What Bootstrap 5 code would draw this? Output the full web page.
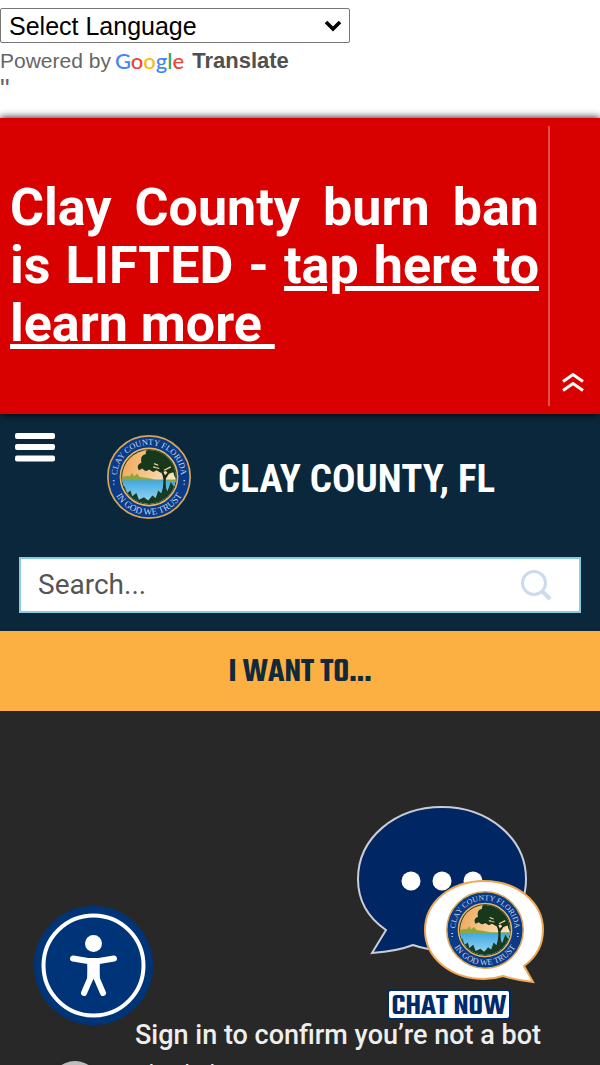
<!DOCTYPE html>
<html lang="en">
<head>
<meta charset="utf-8">
<meta name="viewport" content="width=device-width, initial-scale=1">
<title>Clay County, FL</title>
<link href="https://cdn.jsdelivr.net/npm/bootstrap@5.3.0/dist/css/bootstrap.min.css" rel="stylesheet">
<style>
  body { font-family: Roboto, "Liberation Sans", sans-serif; background: #282828; }
  .translate-bar { font: 21px/28px "Liberation Sans", sans-serif; color: #666; padding-bottom: 15px; }
  .language-select {
    appearance: none; width: 350px; height: 35px; padding: 0 36px 0 8px; font-size: 25px; line-height: 32px; color: #000;
    border: 1px solid #767676; border-radius: 2px;
    background: #fff url("data:image/svg+xml,%3Csvg xmlns='http://www.w3.org/2000/svg' viewBox='0 0 18 12'%3E%3Cpath d='M2 2l7 7 7-7' fill='none' stroke='%23000' stroke-width='3.6'/%3E%3C/svg%3E") no-repeat right 7px center / 18px 12px;
  }
  .google-word { font-family: Lato, sans-serif; font-size: 22px; font-weight: 500; }
  .g-blue { color: #4285f4; } .g-red { color: #ea4335; } .g-yellow { color: #fbbc05; } .g-green { color: #34a853; }
  .translate-word { color: #505050; font-size: 22px; }
  .stray-quote { font-size: 27px; }
  .alert-banner { background: #d90000; box-shadow: 0 0 8px #000; padding: 8px 0; }
  .alert-text { font-size: 52px; line-height: 58px; font-weight: 700; text-align: justify; padding: 53px 9px 53px 10px; }
  .alert-side { width: 52px; border-left: 2px solid #e84c4c; padding: 0 5px 14px 0; }
  .site-header { background: #0b273b; padding: 19px 19px 18px; }
  .menu-btn { width: 40px; height: 29px; margin-left: -4px; }
  .brand { margin-left: 52px; gap: 27px; margin-top: 2px; }
  .brand-name { font-family: "Roboto Condensed", "Liberation Sans Narrow", Roboto, sans-serif; font-size: 39px; line-height: 46px; font-weight: 700; padding-top: 4px; }
  .seal-logo { width: 84px; height: 84px; }
  .search-box { margin-top: 38px; height: 56px; border: 2px solid #8bcbdc; background: #fff; }
  .search-box input { font-size: 28px; line-height: 32px; color: #555; padding: 0 17px; }
  .search-box input::placeholder { color: #555; opacity: 1; }
  .search-btn { width: 58px; margin-right: 14px; }
  .want-btn { background: #fdb042; color: #12293a; height: 80px; font-family: Teko, "Roboto Condensed", Roboto, sans-serif; font-size: 34px; line-height: 40px; font-weight: 600; padding-top: 10px; }
  .video-panel { background: #282828; padding: 307px 24px 0 50px; }
  .video-avatar { width: 50px; height: 50px; background: #bdbdbd; margin-top: 43px; }
  .video-copy { padding-left: 11px; }
  .video-title { font-size: 27px; line-height: 34px; font-weight: 500; color: #eee; }
  .video-note { font-size: 23px; line-height: 30px; color: #eee; margin-top: 8px; }
  .access-btn { left: 34px; bottom: 40px; width: 119px; height: 119px; }
  .chat-btn { right: 55px; bottom: 45px; width: 190px; }
  .chat-label { width: 124px; height: 31px; margin-left: 32px; border: 2px solid #002b6b; border-radius: 4px; background: #fff; color: #002b6b; font-family: Teko, "Roboto Condensed", Roboto, sans-serif; font-size: 31px; line-height: 32px; font-weight: 600; }
</style>
</head>
<body>
<svg width="0" height="0" class="position-absolute" aria-hidden="true">
  <defs>
    <clipPath id="scene"><circle cx="50" cy="50" r="32"/></clipPath>
    <linearGradient id="sky" x1="0" y1="0" x2="1" y2="0.3"><stop offset="0" stop-color="#f0a050"/><stop offset="1" stop-color="#fbe6c0"/></linearGradient>
    <linearGradient id="water" x1="0" y1="0" x2="0" y2="1"><stop offset="0" stop-color="#3fa9e0"/><stop offset="1" stop-color="#a9dcf2"/></linearGradient>
    <path id="arcTop" d="M12.500 56A38 38 0 1 1 87.500 56"/>
    <path id="arcBottom" d="M5 50A45 45 0 0 0 95 50"/>
    <symbol id="seal" viewBox="0 0 100 100">
      <circle cx="50" cy="50" r="49" fill="#0b3a86" stroke="#d8a657" stroke-width="2"/>
      <circle cx="50" cy="50" r="34" fill="#12351f" stroke="#e3b56a" stroke-width="2"/>
      <g clip-path="url(#scene)">
        <rect x="15" y="15" width="70" height="70" fill="url(#sky)"/>
        <path d="M15 51q8-3 12-2l3-4 2 4 4-3 3 4q10 1 18 3h28v6H15z" fill="#8fa63c"/>
        <path d="M15 54h54l14 2v28H15z" fill="url(#water)"/>
        <path d="M38 42q-4-6 3-9-2-9 5-10 0-9 10-7 12-4 18 5 10 5 11 18l-2 14q-3-3-4-8l-5 2-4-4-6 2-5-3-4 2-5-3q-4 4-8-1z" fill="#18381c"/>
        <path d="M55 38l7 2M76 38l-8 4M79 45l-9 3M56 34l5 2" stroke="#f4d7a2" stroke-width="1.500"/>
        <path d="M57 38q9 4 10 14t-4 22h10q-4-12-3-22l8-13-9 9-5-11-1 7z" fill="#1c2c17"/>
        <path d="M14 56l4 7 3-2 3 8 4-3 2 7 5-4 3 8 6-3 5 4 5-6 4 3 3-9 4 4 4-9 3 6 4-11 4 6 6-6v36H14z" fill="#173b23"/>
      </g>
      <text fill="#c9d5e8" font-family="Liberation Serif, serif" font-size="10"><textPath href="#arcTop" startOffset="50%" text-anchor="middle">CLAY COUNTY FLORIDA</textPath></text>
      <text fill="#c9d5e8" font-family="Liberation Serif, serif" font-size="11"><textPath href="#arcBottom" startOffset="50%" text-anchor="middle">IN GOD WE TRUST</textPath></text>
      <path d="M8 54v1M8 58v1M92 54v1M92 58v1" stroke="#e6e6ee" stroke-width="2"/>
    </symbol>
  </defs>
</svg>

<div class="vh-100 d-flex flex-column position-relative overflow-hidden">
  <div class="translate-bar bg-white pt-2">
    <select class="language-select d-block" aria-label="Select Language"><option>Select Language</option></select>
    <div class="d-flex align-items-center pt-1">
      <span>Powered by</span>
      <a href="#" class="text-decoration-none d-flex align-items-center ms-1"><span class="google-word"><span class="g-blue">G</span><span class="g-red">o</span><span class="g-yellow">o</span><span class="g-blue">g</span><span class="g-green">l</span><span class="g-red">e</span></span><strong class="translate-word ms-2">Translate</strong></a>
    </div>
    <div class="stray-quote">"</div>
  </div>

  <section class="alert-banner d-flex position-relative text-white" aria-label="Emergency alert">
    <p class="alert-text flex-fill mb-0">Clay County burn ban is LIFTED - <a href="#" class="text-white">tap here to learn more&nbsp;</a></p>
    <div class="alert-side flex-shrink-0 d-flex align-items-end justify-content-center">
      <button type="button" class="btn p-0 border-0 lh-1 text-white" aria-label="Collapse alert">
        <svg width="22" height="20" viewBox="0 0 22 20" fill="none" stroke="currentColor" stroke-width="3"><path d="M1 9.500L11 2.500l10 7M1 18.500l10-7 10 7"/></svg>
      </button>
    </div>
  </section>

  <header class="site-header">
    <div class="d-flex align-items-start">
      <button type="button" class="menu-btn btn p-0 border-0 d-flex flex-shrink-0" aria-label="Menu">
        <svg width="40" height="29" viewBox="0 0 40 29" fill="#fff"><rect width="40" height="6" rx="2"/><rect y="11" width="40" height="6" rx="2"/><rect y="22.500" width="40" height="6" rx="2"/></svg>
      </button>
      <a href="#" class="brand d-flex align-items-center text-white text-decoration-none">
        <svg class="seal-logo flex-shrink-0" aria-hidden="true"><use href="#seal"/></svg>
        <span class="brand-name text-nowrap">CLAY COUNTY, FL</span>
      </a>
    </div>
    <form class="search-box d-flex">
      <input type="text" class="form-control border-0 rounded-0 shadow-none bg-transparent" placeholder="Search..." aria-label="Search">
      <button type="button" class="search-btn btn p-0 border-0 flex-shrink-0" aria-label="Submit search">
        <svg width="32" height="32" viewBox="0 0 32 32" fill="none" stroke="#c9dced" stroke-width="3"><circle cx="14" cy="14" r="11.500"/><path d="M22 22l8 8" stroke-width="4"/></svg>
      </button>
    </form>
  </header>

  <button type="button" class="want-btn btn border-0 rounded-0 w-100 flex-shrink-0">I WANT TO...</button>

  <main class="video-panel d-flex gap-4 flex-fill overflow-hidden">
    <div class="video-avatar rounded-circle flex-shrink-0"></div>
    <div class="video-copy text-nowrap">
      <div class="video-title">Sign in to confirm you’re not a bot</div>
      <div class="video-note">This helps protect our community.</div>
    </div>
  </main>

  <button type="button" class="access-btn btn p-0 border-0 position-absolute d-flex" aria-label="Accessibility options">
    <svg viewBox="0 0 119 119" width="119" height="119"><circle cx="59.500" cy="59.500" r="59.500" fill="#003478"/><circle cx="59.500" cy="59.500" r="50" fill="none" stroke="#fff" stroke-width="4"/><circle cx="59.500" cy="37.500" r="8.500" fill="#fff"/><path d="M39 52.500l15 2.500h11l15-2.500M57 58l-1 15-6 14M62 58l1 15 6 14" fill="none" stroke="#fff" stroke-width="6" stroke-linecap="round" stroke-linejoin="round"/><path d="M53 54h13l-1 22h-3l-2.500-3-2.500 3h-3z" fill="#fff"/></svg>
  </button>

  <button type="button" class="chat-btn btn p-0 border-0 rounded-0 position-absolute">
    <svg class="d-block" width="190" height="184" viewBox="0 0 190 184" aria-hidden="true">
      <path d="M87 2C133 2 171 33 171 74s-38 71-84 71q-15 0-29-5-15 6-41 8l14-23C12 112 3 94 3 74 3 33 40 2 87 2z" fill="#002663" stroke="#c9cdd6" stroke-width="2"/>
      <circle cx="56" cy="76" r="9.500" fill="#fff"/><circle cx="87" cy="76" r="9.500" fill="#fff"/><circle cx="118" cy="76" r="9.500" fill="#fff"/>
      <path d="M129 76c33 0 59 21 59 49q0 22-19 36l9 16q-17-2-30-6-9 3-19 3c-33 0-59-21-59-49s26-49 59-49z" fill="#fff" stroke="#efa853" stroke-width="2"/>
      <svg x="91" y="86" width="78" height="78"><use href="#seal"/></svg>
    </svg>
    <span class="chat-label d-block text-nowrap">CHAT NOW</span>
  </button>
</div>
<script src="https://cdn.jsdelivr.net/npm/bootstrap@5.3.0/dist/js/bootstrap.bundle.min.js"></script>
</body>
</html>
